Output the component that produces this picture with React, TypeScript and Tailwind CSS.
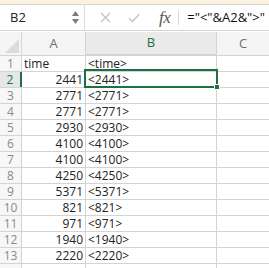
import React from 'react';

const ROWS: [string, string][] = [
  ['time', '<time>'],
  ['2441', '<2441>'],
  ['2771', '<2771>'],
  ['2771', '<2771>'],
  ['2930', '<2930>'],
  ['4100', '<4100>'],
  ['4100', '<4100>'],
  ['4250', '<4250>'],
  ['5371', '<5371>'],
  ['821', '<821>'],
  ['971', '<971>'],
  ['1940', '<1940>'],
  ['2220', '<2220>'],
  ['', ''],
];

const GREEN = 'border-[#1d7044]';

export default function App() {
  return (
    <div className="relative w-[269px] h-[268px] overflow-hidden bg-white font-['Open_Sans',sans-serif] text-[12px] text-[#222]">
      {/* window strip */}
      <div className="h-[5px] bg-[#fbf3df] border-b border-[#d8d8d8]" />

      {/* formula bar */}
      <div className="h-[26px] flex items-center border-b border-[#d2d2d2]">
        <div className="w-[84px] h-full flex items-center justify-between pl-[10px] pr-[5px]">
          <span className="text-[13px] text-[#222]">B2</span>
          <div className="flex flex-col items-center gap-[3px]">
            <svg width="7" height="5" viewBox="0 0 7 5"><path d="M3.5 0L7 5H0z" fill="#7a7a7a" /></svg>
            <svg width="7" height="5" viewBox="0 0 7 5"><path d="M0 0h7L3.5 5z" fill="#7a7a7a" /></svg>
          </div>
        </div>
        <div className="w-px self-stretch bg-[#dcdcdc]" />
        <div className="ml-[15px] flex items-center">
          <svg width="11" height="11" viewBox="0 0 11 11">
            <path d="M1 1l9 9M10 1l-9 9" stroke="#c4c4c4" strokeWidth="1.4" />
          </svg>
        </div>
        <div className="ml-[17px] flex items-center">
          <svg width="12" height="10" viewBox="0 0 12 10">
            <path d="M1 5.2l3.4 3.4L11 1.5" stroke="#c4c4c4" strokeWidth="1.4" fill="none" />
          </svg>
        </div>
        <span className="ml-[19px] font-['Liberation_Serif',serif] italic text-[17px] leading-none text-[#555] tracking-[-0.5px]">fx</span>
        <div className="ml-[8px] w-px h-[14px] bg-[#d6d6d6]" />
        <span className="ml-[8px] text-[13px] font-medium text-[#111]">="&lt;"&amp;A2&amp;"&gt;"</span>
      </div>

      {/* column headers */}
      <div className="mt-px h-[24px] flex border-b border-[#d4d4d4] text-[#6e6e6e]">
        <div className="relative w-[22px] border-r border-[#d4d4d4] bg-[#f5f5f5]">
          <svg className="absolute right-[2px] bottom-[2px]" width="14" height="14" viewBox="0 0 14 14">
            <path d="M14 0V14H0z" fill="#dcdcdc" />
          </svg>
        </div>
        <div className="w-[64px] flex items-center justify-center border-r border-[#d4d4d4] bg-[#f5f5f5] text-[13px]">A</div>
        <div className={`w-[131px] flex items-center justify-center border-r border-[#d4d4d4] border-b-2 ${GREEN} bg-[#eaeaea] text-[13px] text-[#1d7044] mb-[-1px]`}>B</div>
        <div className="flex-1 flex items-center justify-center bg-[#f5f5f5] text-[13px]">C</div>
      </div>

      {/* rows */}
      {ROWS.map(([a, b], i) => {
        const n = i + 1;
        const sel = n === 2;
        const num = /^\d+$/.test(a);
        return (
          <div key={n} className="h-[16px] flex border-b border-[#d4d4d4] leading-[15px]">
            <div
              className={`w-[22px] text-center ${sel ? `border-r-2 ${GREEN} text-[#1d7044] bg-[#e6e6e6]` : 'border-r border-[#d4d4d4] text-[#8a8a8a] bg-[#f7f7f7]'}`}
            >
              {a || b ? n : ''}
            </div>
            <div className={`w-[64px] border-r border-[#d4d4d4] px-[2px] whitespace-nowrap ${num ? 'text-right' : 'text-left'}`}>{a}</div>
            <div className="w-[131px] border-r border-[#d4d4d4] px-[2px] whitespace-nowrap">{b}</div>
            <div className="flex-1" />
          </div>
        );
      })}

      {/* selection */}
      <div className={`absolute left-[84px] top-[69px] w-[134px] h-[19px] border-2 ${GREEN}`} />
      <div className="absolute left-[214px] top-[84px] w-[6px] h-[6px] bg-[#1d7044] border border-white" />
    </div>
  );
}
